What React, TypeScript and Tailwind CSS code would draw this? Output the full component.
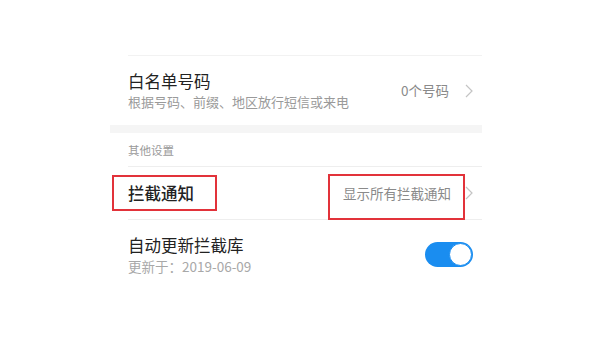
import React from 'react';

function Chevron() {
  return (
    <svg width="8" height="14" viewBox="0 0 8 14" className="shrink-0">
      <path d="M1 1l6 6-6 6" fill="none" stroke="#c4c4c4" strokeWidth="1.2" />
    </svg>
  );
}

export default function App() {
  return (
    <div className="w-[608px] h-[342px] bg-white overflow-hidden font-['Noto_Sans_CJK_SC',sans-serif]">
      <div className="ml-[110px] w-[372px] pt-[55px]">
        {/* 白名单号码 */}
        <div className="ml-[18px] border-t border-[#f2f2f2] h-[70px] flex items-center justify-between pr-[9px]">
          <div className="flex flex-col">
            <div className="text-[16.5px] leading-[22px] text-[#222]">白名单号码</div>
            <div className="text-[13px] leading-[18px] text-[#9a9a9a] mt-[1px]">根据号码、前缀、地区放行短信或来电</div>
          </div>
          <div className="flex items-center gap-[16px]">
            <span className="text-[13.5px] text-[#8a8a8a]">0个号码</span>
            <Chevron />
          </div>
        </div>

        <div className="h-[8px] bg-[#f5f5f5]" />

        {/* 其他设置 */}
        <div className="ml-[18px] h-[34px] flex items-center border-b border-[#eeeeee]">
          <span className="text-[11.5px] text-[#9a9a9a] pt-[2px]">其他设置</span>
        </div>

        {/* 拦截通知 */}
        <div className="relative ml-[18px] h-[53px] flex items-center justify-between border-b border-[#eeeeee] pr-[9px]">
          <span className="text-[16.5px] font-medium text-[#222]">拦截通知</span>
          <div className="flex items-center gap-[14px]">
            <span className="text-[13.5px] text-[#8a8a8a]">显示所有拦截通知</span>
            <Chevron />
          </div>
          <div className="absolute left-[-16px] top-[8px] w-[105px] h-[36px] border-2 border-[#e2323a]" />
          <div className="absolute left-[200px] top-[7px] w-[137px] h-[46px] border-2 border-[#e2323a]" />
        </div>

        {/* 自动更新拦截库 */}
        <div className="ml-[18px] h-[70px] flex items-center justify-between pr-[9px] pb-[2px]">
          <div className="flex flex-col">
            <div className="text-[16.5px] leading-[22px] text-[#222]">自动更新拦截库</div>
            <div className="text-[13.5px] leading-[18px] text-[#a8a8a8] mt-[1px]">更新于：2019-06-09</div>
          </div>
          <div className="w-[48px] h-[25px] rounded-full bg-[#1a8df0] flex items-center justify-end pr-[1px]">
            <div className="w-[23px] h-[23px] rounded-full bg-white border border-[#1a8df0]" />
          </div>
        </div>
      </div>
    </div>
  );
}
